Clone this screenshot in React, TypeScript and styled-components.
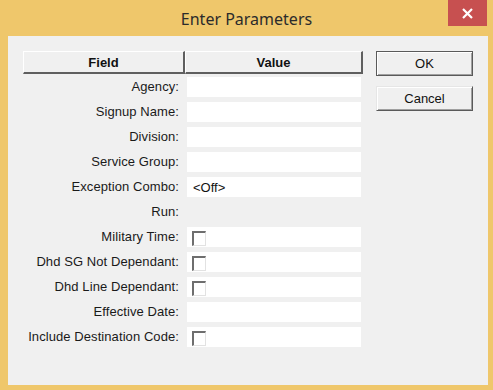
import React from "react";
import styled, { createGlobalStyle } from "styled-components";

const GlobalStyle = createGlobalStyle`
  html, body { margin: 0; padding: 0; background: #efc76b; }
  * { box-sizing: border-box; }
`;

const Window = styled.div`
  width: 493px;
  height: 390px;
  background: #efc76b;
  display: flex;
  flex-direction: column;
  font-family: "Liberation Sans", Arial, sans-serif;
`;

const TitleBar = styled.div`
  height: 36px;
  display: grid;
  grid-template-columns: 1fr auto 1fr;
  align-items: start;
`;

const Title = styled.div`
  grid-column: 2;
  font-family: "Noto Sans", "Open Sans", sans-serif;
  font-size: 16px;
  color: #2b2b2b;
  line-height: 20px;
  padding-top: 9px;
`;

const CloseButton = styled.div`
  grid-column: 3;
  justify-self: end;
  margin-right: 6px;
  width: 39px;
  height: 26px;
  background: #c75050;
  display: flex;
  align-items: center;
  justify-content: center;
`;

const Client = styled.div`
  flex: 1;
  margin: 0 5px 5px 8px;
  background: #f0f0f0;
  padding: 15px 0 0 15px;
  display: flex;
  align-items: flex-start;
  gap: 13px;
`;

const Table = styled.div`
  width: 340px;
  display: flex;
  flex-direction: column;
`;

const Header = styled.div`
  display: grid;
  grid-template-columns: 162px 178px;
  height: 23px;
`;

const HeaderCell = styled.div`
  background: #f0f0f0;
  border-top: 1px solid #ffffff;
  border-left: 1px solid #ffffff;
  border-right: 2px solid #5f5f5f;
  border-bottom: 2px solid #5f5f5f;
  font-weight: bold;
  font-size: 13px;
  color: #111;
  display: flex;
  align-items: center;
  justify-content: center;
  padding-top: 1px;
`;

const Rows = styled.div`
  padding-top: 3px;
  display: flex;
  flex-direction: column;
`;

const Row = styled.div`
  display: grid;
  grid-template-columns: 162px 178px;
  height: 25px;
  align-items: start;
`;

const Label = styled.div`
  text-align: right;
  padding-right: 6px;
  font-size: 13px;
  letter-spacing: 0.08px;
  line-height: 20px;
  color: #1a1a1a;
`;

const ValueBox = styled.div<{ $visible: boolean }>`
  margin-left: 2px;
  width: 174px;
  height: 20px;
  background: ${(p) => (p.$visible ? "#ffffff" : "transparent")};
  display: flex;
  align-items: center;
  padding-left: 6px;
  font-size: 13px;
  color: #111;
`;

const Check = styled.div`
  width: 14px;
  height: 15px;
  margin-left: -1px;
  margin-top: 2px;
  background: #ffffff;
  border-top: 2px solid #6e6e6e;
  border-left: 2px solid #6e6e6e;
  border-right: 1px solid #e2e2e2;
  border-bottom: 1px solid #e2e2e2;
`;

const Buttons = styled.div`
  display: flex;
  flex-direction: column;
  gap: 10px;
  width: 97px;
`;

const Button = styled.div<{ $default?: boolean }>`
  height: 25px;
  background: #f0f0f0;
  border: 1px solid ${(p) => (p.$default ? "#5a5a5a" : "#e6e6e6")};
  ${(p) =>
    p.$default
      ? "box-shadow: inset 1px 1px 0 #ffffff, inset -1px -1px 0 #a0a0a0;"
      : "border-right-color: #5a5a5a; border-bottom-color: #5a5a5a; box-shadow: inset 1px 1px 0 #ffffff, inset -1px -1px 0 #a0a0a0;"}
  display: flex;
  align-items: center;
  justify-content: center;
  font-size: 13px;
  color: #111;
`;

type Field = { label: string; kind: "text" | "check" | "none"; value?: string };

const fields: Field[] = [
  { label: "Agency:", kind: "text" },
  { label: "Signup Name:", kind: "text" },
  { label: "Division:", kind: "text" },
  { label: "Service Group:", kind: "text" },
  { label: "Exception Combo:", kind: "text", value: "<Off>" },
  { label: "Run:", kind: "none" },
  { label: "Military Time:", kind: "check" },
  { label: "Dhd SG Not Dependant:", kind: "check" },
  { label: "Dhd Line Dependant:", kind: "check" },
  { label: "Effective Date:", kind: "text" },
  { label: "Include Destination Code:", kind: "check" },
];

export default function App() {
  return (
    <>
      <GlobalStyle />
      <Window>
        <TitleBar>
          <Title>Enter Parameters</Title>
          <CloseButton>
            <svg width="11" height="11" viewBox="0 0 11 11">
              <path d="M1 1 L10 10 M10 1 L1 10" stroke="#ffffff" strokeWidth="2.2" />
            </svg>
          </CloseButton>
        </TitleBar>
        <Client>
          <Table>
            <Header>
              <HeaderCell>Field</HeaderCell>
              <HeaderCell>Value</HeaderCell>
            </Header>
            <Rows>
              {fields.map((f) => (
                <Row key={f.label}>
                  <Label>{f.label}</Label>
                  <ValueBox $visible={f.kind !== "none"}>
                    {f.kind === "check" ? <Check /> : f.value}
                  </ValueBox>
                </Row>
              ))}
            </Rows>
          </Table>
          <Buttons>
            <Button $default>OK</Button>
            <Button>Cancel</Button>
          </Buttons>
        </Client>
      </Window>
    </>
  );
}
